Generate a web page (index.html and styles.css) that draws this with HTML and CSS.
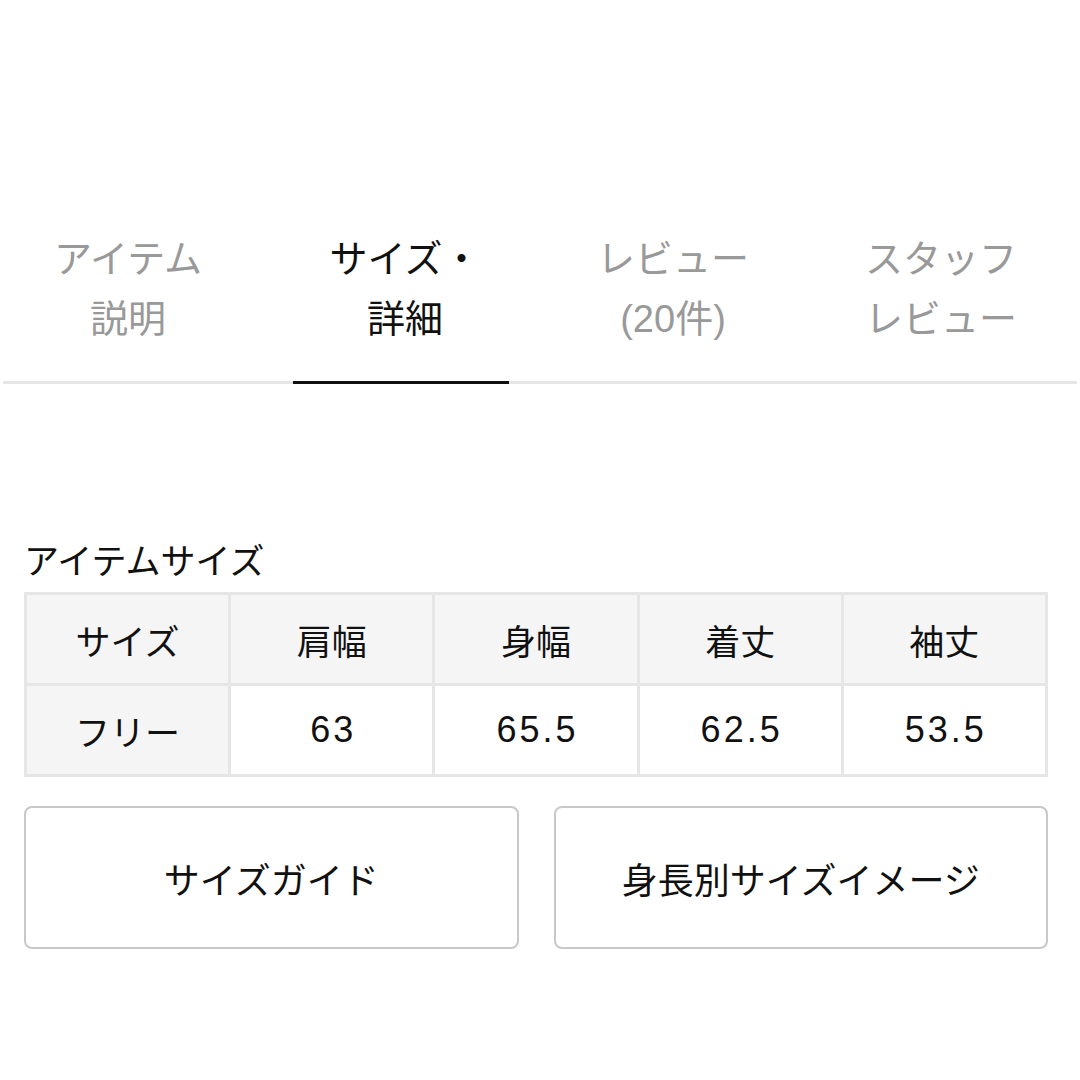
FILE: index.html
```html
<!DOCTYPE html>
<html lang="ja">
<head>
<meta charset="utf-8">
<link rel="stylesheet" href="styles.css">
</head>
<body>
<div class="page">
  <nav class="tabs">
    <div class="tab">アイテム<br>説明</div>
    <div class="tab active">サイズ・<br>詳細</div>
    <div class="tab">レビュー<br>(20件)</div>
    <div class="tab">スタッフ<br>レビュー</div>
  </nav>
  <section class="size">
    <h2 class="size-title">アイテムサイズ</h2>
    <table class="size-table">
      <tr>
        <th>サイズ</th><th>肩幅</th><th>身幅</th><th>着丈</th><th>袖丈</th>
      </tr>
      <tr>
        <th>フリー</th><td>63</td><td>65.5</td><td>62.5</td><td>53.5</td>
      </tr>
    </table>
    <div class="buttons">
      <button class="btn">サイズガイド</button>
      <button class="btn">身長別サイズイメージ</button>
    </div>
  </section>
</div>
</body>
</html>
```

FILE: styles.css
```css
html, body {
  margin: 0;
  padding: 0;
  background: #fff;
}
body {
  font-family: "Liberation Sans", "Noto Sans CJK JP", sans-serif;
  color: #111;
  width: 1080px;
  height: 1080px;
  overflow: hidden;
}
.page {
  padding-top: 229px;
}
.tabs {
  display: grid;
  grid-template-columns: repeat(4, 268px);
  margin: 0 3px;
  border-bottom: 3px solid #e6e6e6;
}
.tab {
  position: relative;
  text-align: center;
  font-size: 38px;
  line-height: 60px;
  color: #999;
  padding-bottom: 32px;
}
.tab:first-child {
  padding-right: 18px;
}
.tab.active {
  color: #111;
}
.tab.active::after {
  content: "";
  position: absolute;
  left: 22px;
  right: 30px;
  bottom: -3px;
  height: 3px;
  background: #111;
}
.size {
  padding: 0 32px 0 24px;
  margin-top: 158px;
}
.size-title {
  margin: 0 0 10px 0;
  font-weight: normal;
  font-size: 35px;
  line-height: 40px;
}
.size-table {
  width: 100%;
  border-collapse: collapse;
  table-layout: fixed;
  border: 3px solid #e6e6e6;
}
.size-table th,
.size-table td {
  border: 3px solid #e6e6e6;
  height: 88px;
  padding: 0;
  text-align: center;
  font-size: 35px;
  font-weight: normal;
  color: #111;
}
.size-table th {
  background: #f5f5f5;
}
.size-table td {
  background: #fff;
  font-size: 36px;
  letter-spacing: 3px;
  text-indent: 3px;
}
.buttons {
  display: flex;
  gap: 35px;
  margin-top: 29px;
}
.btn {
  flex: 1;
  height: 143px;
  background: #fff;
  border: 2px solid #c8c8c8;
  border-radius: 8px;
  font-family: "Liberation Sans", "Noto Sans CJK JP", sans-serif;
  font-size: 36px;
  color: #111;
  padding: 0;
}
```
